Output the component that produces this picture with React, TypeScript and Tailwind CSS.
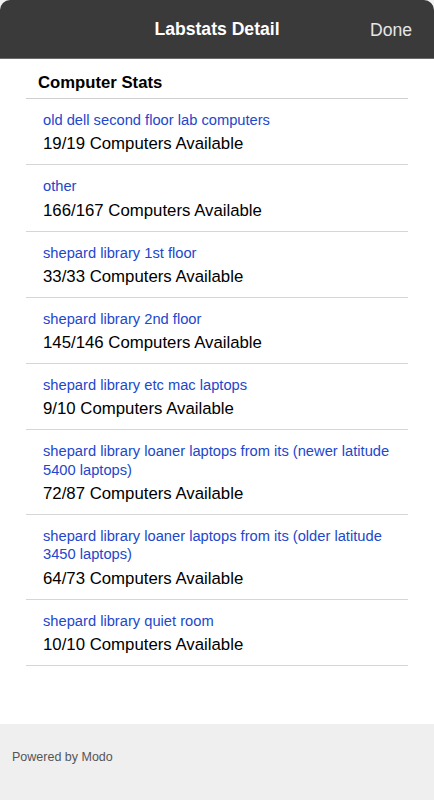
import React from "react";

const items = [
  { name: "old dell second floor lab computers", count: "19/19 Computers Available" },
  { name: "other", count: "166/167 Computers Available" },
  { name: "shepard library 1st floor", count: "33/33 Computers Available" },
  { name: "shepard library 2nd floor", count: "145/146 Computers Available" },
  { name: "shepard library etc mac laptops", count: "9/10 Computers Available" },
  {
    name: "shepard library loaner laptops from its (newer latitude 5400 laptops)",
    count: "72/87 Computers Available",
  },
  {
    name: "shepard library loaner laptops from its (older latitude 3450 laptops)",
    count: "64/73 Computers Available",
  },
  { name: "shepard library quiet room", count: "10/10 Computers Available" },
];

export default function App() {
  return (
    <div
      className="flex min-h-[800px] w-[434px] flex-col bg-[#f2f2f2]"
      style={{ fontFamily: '"Liberation Sans", Arial, Helvetica, sans-serif' }}
    >
      <header className="relative flex h-[59px] items-center justify-center rounded-t-[10px] border-b border-[#6a6a6a] bg-[#3a3a3a]">
        <h1 className="text-[17.6px] font-bold text-white">Labstats Detail</h1>
        <span className="absolute right-[22px] top-[18px] text-[17.6px] leading-[24px] text-[#e6e6e6]">Done</span>
      </header>
      <main className="flex-1 bg-white px-[26px] pb-[58px]">
        <h2 className="border-b border-[#cfcfcf] px-[12px] pt-[13px] pb-[5px] text-[16.7px] font-bold leading-[21px] text-black">
          Computer Stats
        </h2>
        <ul>
          {items.map((it) => (
            <li key={it.name} className="border-b border-[#d6d6d6] pl-[17px] pr-[12px] pt-[12px] pb-[10px]">
              <a className="block text-[14.7px] leading-[18.3px] text-[#2247cc]">{it.name}</a>
              <div className="mt-[5px] text-[16.8px] leading-[20px] text-black">{it.count}</div>
            </li>
          ))}
        </ul>
      </main>
      <footer className="h-[76px] bg-[#efefef] px-[12px] pt-[24px] text-[12.5px] text-[#555]">
        Powered by Modo
      </footer>
    </div>
  );
}
